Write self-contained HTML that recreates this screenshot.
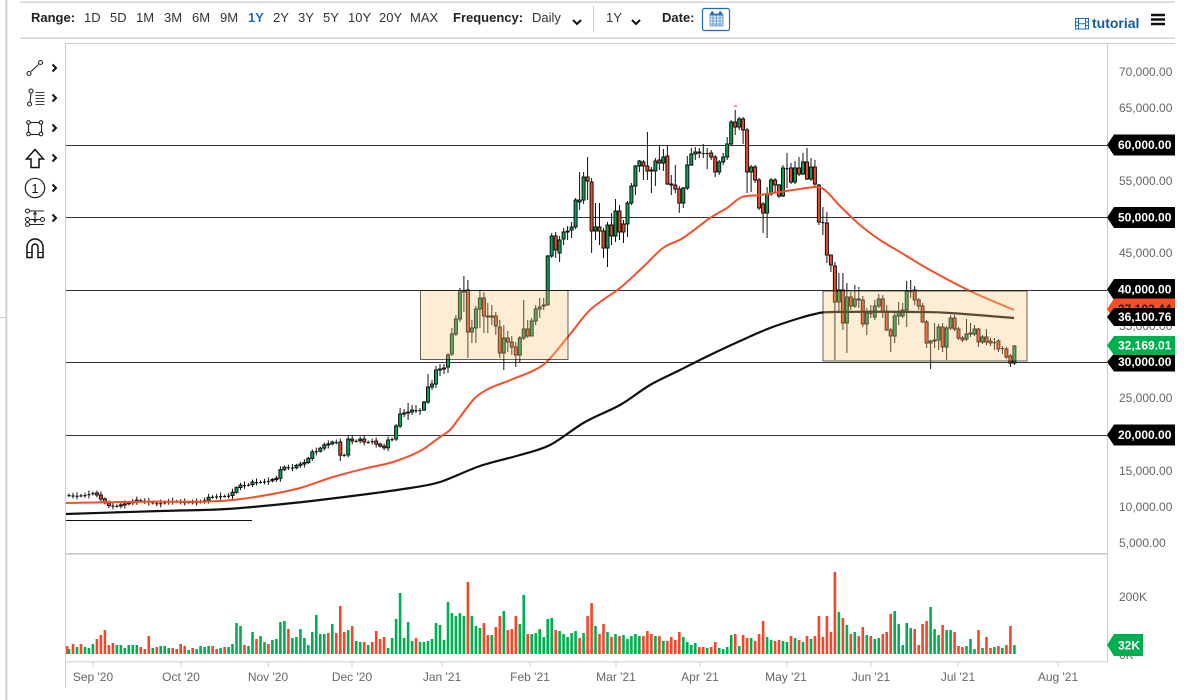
<!DOCTYPE html>
<html><head><meta charset="utf-8"><title>Chart</title>
<style>
html,body{margin:0;padding:0;background:#fff;width:1184px;height:700px;overflow:hidden}
svg{display:block;font-family:"Liberation Sans",Arial,sans-serif}
.r{font-size:13px;fill:#333}
.b{font-size:13px;font-weight:700;fill:#222}
.a{font-size:12px;fill:#666}
.x{font-size:12px;fill:#666;text-anchor:middle}
.t{font-size:12px;font-weight:700;fill:#fff}
</style></head><body>
<svg id="s" width="1184" height="700" viewBox="0 0 1184 700" xmlns="http://www.w3.org/2000/svg">
<!-- outer frame -->
<g fill="#ccc">
<rect x="5.500" y="0" width="1.800" height="700"/>
<rect x="0" y="317" width="6" height="1"/>
<rect x="20" y="1.500" width="1155" height="1.300"/>
<rect x="20" y="37.500" width="1155" height="1.300"/>
<rect x="65" y="43" width="1110" height="1"/>
<rect x="65" y="43" width="1" height="645"/>
<rect x="1107" y="43" width="1" height="619"/>
<rect x="66" y="553" width="1042" height="1.600" fill="#c8c8c8"/>
<rect x="66" y="661" width="1042" height="1.500" fill="#ddd"/>
</g>
<!-- toolbar -->
<text x="31" y="22" class="b">Range:</text>
<text x="84" y="22" class="r">1D</text><text x="110" y="22" class="r">5D</text>
<text x="136" y="22" class="r">1M</text><text x="164" y="22" class="r">3M</text>
<text x="192" y="22" class="r">6M</text><text x="220" y="22" class="r">9M</text>
<text x="248" y="22" class="r" style="fill:#1a6ebd;font-weight:700">1Y</text>
<text x="273" y="22" class="r">2Y</text><text x="298" y="22" class="r">3Y</text>
<text x="323" y="22" class="r">5Y</text><text x="348" y="22" class="r">10Y</text>
<text x="379" y="22" class="r">20Y</text><text x="410" y="22" class="r">MAX</text>
<text x="453" y="22" class="b">Frequency:</text>
<text x="532" y="22" class="r">Daily</text>
<path d="M573 20l4 4 4-4M632 20l4 4 4-4" fill="none" stroke="#111" stroke-width="2"/>
<rect x="593" y="6" width="1" height="26" fill="#ccc"/>
<text x="606" y="22" class="r">1Y</text>
<text x="662" y="22" class="b">Date:</text>
<rect x="702.500" y="8.500" width="27" height="22" rx="2" fill="#fff" stroke="#1a6ebd" stroke-width="1.200"/>
<g fill="none" stroke="#5b8fc4" stroke-width=".8">
<rect x="710" y="14" width="13" height="12" fill="#e4eef8"/>
<path d="M710 18h13M710 21h13M710 24h13M713 14v12M716.500 14v12M720 14v12"/>
</g>
<path d="M711 11.500h2.500v4H711zM719 11.500h2.500v4H719z" fill="#1a5c9e"/>
<rect x="710" y="13.500" width="13" height="2" fill="#2f73b5"/>
<g fill="none" stroke="#1a6ebd" stroke-width="1">
<rect x="1075.500" y="18.500" width="13" height="10.500"/>
<path d="M1078.500 18.500v10.500M1085.500 18.500v10.500M1075.500 22h3M1075.500 25.500h3M1085.500 22h3M1085.500 25.500h3M1078.500 23.700h7"/>
</g>
<text x="1092" y="28" style="font-size:14px;font-weight:700;fill:#0f5d9f">tutorial</text>
<path d="M1151 15h14M1151 19.500h14M1151 24h14" stroke="#111" stroke-width="2.600"/>
<!-- left tools -->
<g fill="none" stroke="#222" stroke-width="1.100">
<path d="M31 71.500L38.500 64.500"/><circle cx="29" cy="73.500" r="2" /><circle cx="40.500" cy="62.500" r="2"/>
<path d="M30 102l1-9"/><circle cx="29.500" cy="104" r="2"/><circle cx="31" cy="91" r="2"/>
<path d="M35.500 92.500h9M35.500 95.500h9M35.500 98.500h9M35.500 101.500h9M35.500 104.500h9" stroke="#444"/>
<rect x="28.500" y="122.500" width="13" height="12" stroke="#223"/>
<g fill="#fff"><circle cx="28.500" cy="122.500" r="1.800"/><circle cx="41" cy="122.500" r="1.800"/><circle cx="28.500" cy="134" r="1.800"/><circle cx="41" cy="134" r="1.800"/></g>
<path d="M35 149.500L26.500 159h4.500v8.500h8V159h4.500z" stroke="#111" stroke-width="1.500"/>
<circle cx="35" cy="188" r="9.700" stroke-width="1.200"/>
<circle cx="27.500" cy="211" r="2"/><circle cx="27.500" cy="219.500" r="2"/><circle cx="27.500" cy="224.500" r="2"/><circle cx="42.500" cy="219.500" r="2"/>
<path d="M30 211h14M30 219.500h10.500M30 224.500h14M35 213v9M33.500 214.500l1.500-2.500 1.500 2.500M33.500 219.500l1.500 2.500 1.500-2.500"/>
<path d="M27 257.500V247a8 8 0 0 1 16 0v10.500h-5V247a3 3 0 0 0-6 0v10.500z" stroke="#111" stroke-width="1.500"/>
<path d="M27 252.500h5M38 252.500h5" stroke="#111"/>
</g>
<text x="35" y="193" text-anchor="middle" style="font-size:13px;fill:#111">1</text>
<path d="M52.500 64.500l3.500 3.500-3.500 3.500M52.500 94.500l3.500 3.500-3.500 3.500M52.500 124.500l3.500 3.500-3.500 3.500M52.500 154.500l3.500 3.500-3.500 3.500M52.500 184.500l3.500 3.500-3.500 3.500M52.500 214.500l3.500 3.500-3.500 3.500" fill="none" stroke="#111" stroke-width="2"/>
<!-- axis labels -->
<text x="1119" y="76" class="a">70,000.00</text>
<text x="1119" y="112" class="a">65,000.00</text>
<text x="1119" y="185" class="a">55,000.00</text>
<text x="1119" y="257" class="a">45,000.00</text>
<text x="1119" y="330" class="a">35,000.00</text>
<text x="1119" y="402" class="a">25,000.00</text>
<text x="1119" y="475" class="a">15,000.00</text>
<text x="1119" y="511" class="a">10,000.00</text>
<text x="1119" y="547" class="a">5,000.00</text>
<text x="1119" y="601" class="a">200K</text>
<text x="1119" y="659" class="a">0K</text>
<!-- date axis -->
<path d="M93 662v5M181 662v5M268.500 662v5M352 662v5M442 662v5M530 662v5M616 662v5M700 662v5M787 662v5M871 662v5M958 662v5M1058 662v5" stroke="#ccc"/>
<text x="93" y="681" class="x">Sep '20</text><text x="181" y="681" class="x">Oct '20</text>
<text x="268" y="681" class="x">Nov '20</text><text x="352" y="681" class="x">Dec '20</text>
<text x="442" y="681" class="x">Jan '21</text><text x="530" y="681" class="x">Feb '21</text>
<text x="616" y="681" class="x">Mar '21</text><text x="700" y="681" class="x">Apr '21</text>
<text x="786" y="681" class="x">May '21</text><text x="871" y="681" class="x">Jun '21</text>
<text x="958" y="681" class="x">Jul '21</text><text x="1058" y="681" class="x">Aug '21</text>
<!-- h lines -->
<path d="M66 145.500H1107M66 217.500H1107M66 290.500H1107M66 362.500H1107M66 435.500H1107" stroke="#333" stroke-width="1"/>
<path d="M66 520.500H252" stroke="#111" stroke-width="1"/>
<g id="c"></g>
<path d="M734 106.500l1.500-.8 1.500.8" stroke="#f4502a" fill="none"/>
<path d="M115.500 511.500h3" stroke="#00a651"/>
<!-- moving averages -->
<path id="ma1" d="M66 514L160 511L227 509L293 503L360 495L410 488L440 482L480 466L520 455L550 445L585 422L620 405L650 385L680 370L710 355L740 341L770 328L800 318L815 314L833 312L917 312L950 313L1014 318" fill="none" stroke="#111" stroke-width="2.200" stroke-linejoin="round"/>
<path id="ma2" d="M66 503L143 501.700L200 501.700L233 500L267 495L300 488L333 477L367 468L393 462L420 451L440 437L450 430L460 417L475 398L490 388L513 379L543 365L567 338L587 313L600 302L620 288L641 269L663 248L683 238L710 218L727 208L742 197L760 195L793 190L817 187L827 192L840 206L860 225L880 240L900 252L930 270L970 291L1014 310" fill="none" stroke="#f4502a" stroke-width="2" stroke-linejoin="round"/>
<!-- boxes -->
<rect x="420.500" y="290.500" width="147.500" height="69" fill="#fac878" fill-opacity=".32" stroke="#000" stroke-opacity=".6"/>
<rect x="823" y="291" width="204" height="70" fill="#fac878" fill-opacity=".32" stroke="#000" stroke-opacity=".6"/>
<!-- volume -->
<rect x="66" y="646" width="2.500" height="8" fill="#f4502a"/>
<g id="v"></g>
<!-- tags -->
<g fill="#000">
<path d="M1107 145l7-10.500h61v21h-61z"/>
<path d="M1107 217.500l7-10.500h61v21h-61z"/>
<path d="M1107 289.500l7-10.500h61v21h-61z"/>
<path d="M1107 435l7-10.500h61v21h-61z"/>
<path d="M1107 309l7-10.500h61v21h-61z" fill="#f4502a"/>
</g>
<text x="1118" y="313" class="t" style="fill:#222">37,102.44</text>
<path d="M1107 317l7-9h61v18h-61z" fill="#000"/>
<path d="M1107 362l7-8.500h61v18h-61z" fill="#000"/>
<path d="M1107 345.500l7-9.500h61v19h-61z" fill="#00b050"/>
<path d="M1107 645l7-11h29v22h-29z" fill="#00b050"/>
<text x="1118" y="149" class="t">60,000.00</text>
<text x="1118" y="221.500" class="t">50,000.00</text>
<text x="1118" y="293.500" class="t">40,000.00</text>
<text x="1118" y="439" class="t">20,000.00</text>
<text x="1118" y="321" class="t">36,100.76</text>
<text x="1118" y="366" class="t">30,000.00</text>
<text x="1118" y="349.500" class="t">32,169.01</text>
<text x="1118" y="649.500" class="t">32K</text>
</svg>
<script>
var S=3.989,X0=69;
var A=[[66,495],[73,496],[85,495],[93,493],[97,495],[101,499],[105,503],[109,505.7],[117,506],[128,503],[137,500],[148,502],[157,504],[161,503],[170,501],[180,502],[197,502],[205,500],[209,497],[220,496],[228,496],[232,493],[237,487],[241,485],[248,485],[252,482],[260,482],[268,481],[277,478],[280,470],[284,467],[292,468],[297,465],[304,463],[308,459],[312,452],[317,451],[324,445],[328,444],[332,442],[337,442],[340,455],[344,456],[348,439],[352,441],[356,441],[360,439],[364,442],[368,442],[372,441],[376,444],[380,446],[384,448],[388,440],[392,439]];
function interp(x){for(var k=0;k<A.length-1;k++){if(x<=A[k+1][0]){var t=(x-A[k][0])/(A[k+1][0]-A[k][0]);return A[k][1]+t*(A[k+1][1]-A[k][1])}}return A[A.length-1][1]}
var C=[],prev=495;
for(var i=0;i<82;i++){var c=interp(X0+i*S),o=prev;C.push([o,c,Math.min(o,c)-1.5-(i%3),Math.max(o,c)+1.5+(i*7%3)]);prev=c}
C[68][3]=461;C[70][2]=435;
var B=[439,426,424,441,426,414,408,428,414,413,409,417,413,412,403,420,412,410,405,415,410,410,405,413,410,410,408,415,410,402,401,411,402,387,374,404,387,384,380,390,384,370,366,388,370,369,364,376,369,368,364,374,367,355,353,373,354,334,328,356,334,319,315,336,319,292,288,322,292,291,276,312,290,332,280,358,332,328,320,343,328,309,306,343,309,298,290,328,298,316,292,333,316,317,303,333,316,317,305,325,316,326,312,335,327,353,320,358,353,338,325,370,338,342,331,352,342,347,336,355,347,355,342,367,355,338,336,362,338,329,300,340,329,336,320,338,336,321,318,336,321,309,305,325,309,307,298,318,306,305,298,310,305,256,255,305,256,236,233,258,236,250,232,258,253,240,236,262,239,232,228,245,232,231,226,240,230,227,222,238,227,200,198,229,202,200,172,210,200,177,172,204,177,181,157,200,182,231,178,253,231,227,203,240,227,231,203,245,231,248,228,258,248,225,222,267,225,236,213,245,236,211,199,242,211,232,205,240,224,232,220,243,224,203,201,237,203,186,183,205,186,166,165,195,166,161,160,172,162,166,160,180,166,171,132,180,170,171,167,193,171,161,158,186,160,163,145,170,163,157,149,171,156,184,145,185,184,185,175,195,185,189,165,193,189,203,186,213,203,188,187,208,188,165,156,190,165,154,148,166,154,152,147,160,152,153,148,158,153,153,144,158,153,153,148,169,153,157,150,160,157,172,155,177,172,162,160,175,162,157,153,165,157,144,137,160,144,122,120,145,122,127,110,135,127,119,117,130,119,130,117,144,130,172,128,193,172,167,165,192,167,180,165,183,180,208,178,210,204,213,202,233,213,194,187,238,194,180,178,196,180,185,178,193,185,196,184,198,196,168,165,197,168,168,153,188,168,182,163,184,182,168,161,184,168,174,157,176,174,162,153,175,162,179,148,180,179,167,158,181,167,184,160,186,185,222,184,225,222,222,207,235,223,255,212,263,255,265,255,272,266,302,262,360,302,290,273,312,290,323,273,330,323,297,283,353,297,306,292,310,306,299,285,308,299,300,287,308,300,324,296,327,324,313,308,335,313,313,305,318,317,306,300,320,306,299,294,308,299,312,295,318,312,330,305,331,330,336,328,352,336,316,312,343,316,312,302,325,316,310,303,318,310,291,281,327,291,291,280,298,290,300,286,305,300,306,298,310,306,322,303,323,322,343,320,348,343,341,340,369,341,340,323,348,340,327,324,350,327,347,323,352,347,328,326,360,328,318,315,330,318,329,315,331,329,338,327,340,338,340,336,342,339,334,319,341,334,333,323,337,334,329,325,336,329,342,328,347,342,337,335,344,337,342,329,345,341,343,338,346,342,342,338,350,341,349,339,352,348,348,346,354,349,357,347,359,356,363,354,367,363,346,345,365];
for(i=0;i<B.length;i+=4)C.push([B[i],B[i+1],B[i+2],B[i+3]]);
var h='';
for(i=0;i<C.length;i++){var d=C[i],x=X0+i*S,t=Math.min(d[0],d[1]),b=Math.max(d[0],d[1]);
h+='<path d="M'+x.toFixed(1)+' '+d[2].toFixed(1)+'V'+d[3].toFixed(1)+'" stroke="#111" stroke-width="1"/>';
if(b-t<1){h+='<rect x="'+(x-1.5).toFixed(1)+'" y="'+t.toFixed(1)+'" width="3" height="1.2" fill="#111"/>'}
else{h+='<rect x="'+(x-1.5).toFixed(1)+'" y="'+t.toFixed(1)+'" width="3" height="'+(b-t).toFixed(1)+'" fill="'+(d[1]<d[0]?'#00a651':'#ee4a24')+'" stroke="#111" stroke-width="1"/>'}}
document.getElementById('c').innerHTML=h;
var V=[5,-10,7,-10,7,6,10,-15,-19,-24,-9,-11,9,9,6,9,9,9,-7,-5,-18,6,-7,8,8,6,-6,-5,-10,-8,4,-6,5,8,7,8,-8,-5,6,-7,7,10,31,28,-9,8,22,-15,18,12,-10,14,15,32,33,-25,16,17,25,16,9,22,39,20,20,-21,30,-21,-48,-22,24,-28,13,12,-12,9,-12,-23,-15,-17,6,16,35,61,16,32,13,-16,12,12,13,15,31,29,14,52,41,38,41,38,-72,38,28,26,-31,-19,19,-27,-38,43,-24,-25,-38,30,59,-20,20,21,25,17,35,36,-24,23,20,17,21,23,-16,21,-38,-51,28,-20,-30,22,-17,20,-18,19,15,18,20,18,-18,-23,-20,18,-18,13,-13,-17,-14,-22,17,12,9,11,-7,-7,6,-7,-12,6,5,7,19,-20,8,-19,-16,16,-13,-20,-33,17,14,-13,-14,13,12,-18,16,-14,12,-18,15,-18,-38,-17,-38,-22,-82,42,-36,29,-20,22,-18,-27,19,-18,15,16,-20,-22,-40,43,30,9,31,26,-25,-9,-30,-33,47,25,19,-29,24,24,-22,-8,-7,8,15,5,-24,6,-17,-6,7,-8,6,-9,-28,9];
var o2='',off=238-V.length;
for(i=0;i<V.length;i++){var v=V[i],hh=Math.abs(v),xx=X0+(i+off)*S;
o2+='<rect x="'+(xx-1.3).toFixed(1)+'" y="'+(654-hh)+'" width="2.6" height="'+hh+'" fill="'+(v>0?'#00b050':'#f4472a')+'"/>'}
document.getElementById('v').innerHTML=o2;
/* smooth the moving averages with Catmull-Rom */
['ma1','ma2'].forEach(function(id){var e=document.getElementById(id),n=e.getAttribute('d').match(/[\d.]+/g).map(Number),p=[];
for(var k=0;k<n.length;k+=2)p.push([n[k],n[k+1]]);
var s='M'+p[0][0]+' '+p[0][1];
for(k=0;k<p.length-1;k++){var a=p[Math.max(k-1,0)],b=p[k],c=p[k+1],d=p[Math.min(k+2,p.length-1)],T=.16;
s+='C'+(b[0]+(c[0]-a[0])*T).toFixed(1)+' '+(b[1]+(c[1]-a[1])*T).toFixed(1)+' '+(c[0]-(d[0]-b[0])*T).toFixed(1)+' '+(c[1]-(d[1]-b[1])*T).toFixed(1)+' '+c[0]+' '+c[1]}
e.setAttribute('d',s)});
</script>
</body></html>
